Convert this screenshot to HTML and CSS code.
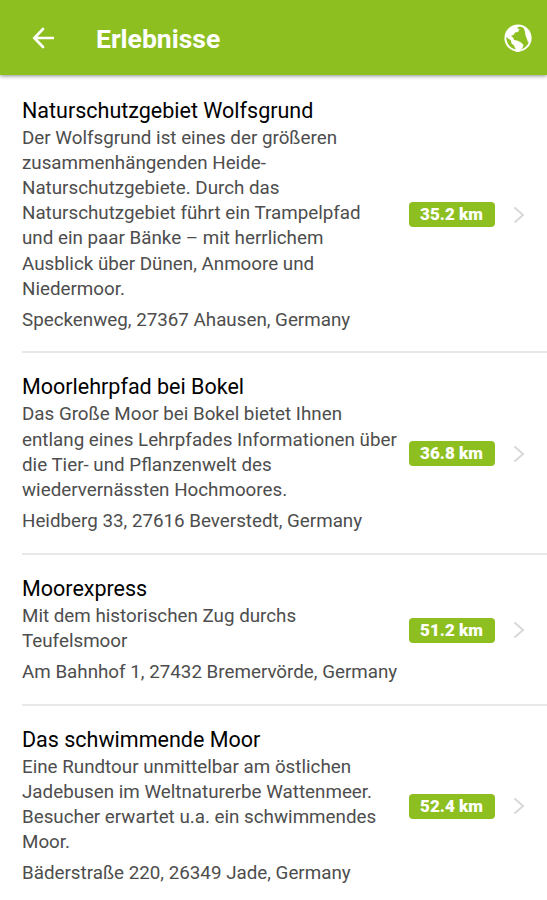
FILE: index.html
```html
<!DOCTYPE html>
<html lang="de">
<head>
    <meta charset="UTF-8">
    <meta name="viewport" content="width=device-width, initial-scale=1.0">
    <title>Erlebnisse</title>
    <link rel="stylesheet" href="styles.css">
</head>
<body>
    <header class="toolbar">
        <svg class="back" viewBox="0 0 22 22">
            <path d="M21 11H2.5M11 2L2.300 11l8.700 9"/>
        </svg>
        <h1>Erlebnisse</h1>
        <svg class="globe" viewBox="0 0 28 28">
            <circle cx="14" cy="14" r="12.600"/>
            <path d="M2 10C4 4 9 1 15 1.200L15.500 2.500l-2.500 1.500 2.500 1.500-1.500 2.500-3 .5-1 2-3 1.500 2.500 2 .5 2 3 .5 4 2 2.500 2.500-1 3-2.500 2-1 3-3 0-.5-4-1.500-3.500-2.500-2-.5-3-3.500-2.500-2.500-2.500zM19 2.500l5 4 2.500 5-.5 6-2 1-1-3.500-1.500-3.500-.5-4z"/>
        </svg>
    </header>

    <ul class="list">
        <li class="item">
            <div class="info">
                <h2>Naturschutzgebiet Wolfsgrund</h2>
                <p>Der Wolfsgrund ist eines der größeren zusammenhängenden Heide-Naturschutzgebiete. Durch das Naturschutzgebiet führt ein Trampelpfad<br>und ein paar Bänke – mit herrlichem<br>Ausblick über Dünen, Anmoore und<br>Niedermoor.</p>
                <p class="address">Speckenweg, 27367 Ahausen, Germany</p>
            </div>
            <span class="badge">35.2 km</span>
            <svg class="chevron" viewBox="0 0 12 18"><path d="M1.500 1.500L10 9l-8.500 7.500"/></svg>
        </li>
        <li class="item">
            <div class="info">
                <h2>Moorlehrpfad bei Bokel</h2>
                <p>Das Große Moor bei Bokel bietet Ihnen entlang eines Lehrpfades Informationen über die Tier- und Pflanzenwelt des wiedervernässten Hochmoores.</p>
                <p class="address">Heidberg 33, 27616 Beverstedt, Germany</p>
            </div>
            <span class="badge">36.8 km</span>
            <svg class="chevron" viewBox="0 0 12 18"><path d="M1.500 1.500L10 9l-8.500 7.500"/></svg>
        </li>
        <li class="item">
            <div class="info">
                <h2>Moorexpress</h2>
                <p>Mit dem historischen Zug durchs Teufelsmoor</p>
                <p class="address">Am Bahnhof 1, 27432 Bremervörde, Germany</p>
            </div>
            <span class="badge">51.2 km</span>
            <svg class="chevron" viewBox="0 0 12 18"><path d="M1.500 1.500L10 9l-8.500 7.500"/></svg>
        </li>
        <li class="item">
            <div class="info">
                <h2>Das schwimmende Moor</h2>
                <p>Eine Rundtour unmittelbar am östlichen Jadebusen im Weltnaturerbe Wattenmeer. Besucher erwartet u.a. ein schwimmendes Moor.</p>
                <p class="address">Bäderstraße 220, 26349 Jade, Germany</p>
            </div>
            <span class="badge">52.4 km</span>
            <svg class="chevron" viewBox="0 0 12 18"><path d="M1.500 1.500L10 9l-8.500 7.500"/></svg>
        </li>
    </ul>
</body>
</html>
```
FILE: styles.css
```css
*{
    margin: 0;
    padding: 0;
    box-sizing: border-box;
}

body{
    font-family: Roboto, sans-serif;
    background-color: #fff;
    height: 900px;
    overflow: hidden;
}

.toolbar{
    height: 75px;
    padding: 0 15px 0 32px;
    background-color: #8dbf21;
    box-shadow: 0 1px 4px rgba(0, 0, 0, 0.45);
    color: white;
    display: flex;
    align-items: center;
}

.toolbar h1{
    flex: 1;
    margin-left: 42px;
    padding-top: 1px;
    font-size: 26.5px;
    font-weight: 700;
}

.back{
    width: 22px;
    height: 22px;
    fill: none;
    stroke: white;
    stroke-width: 2.6;
    stroke-linecap: round;
}

.globe{
    width: 28px;
    height: 28px;
    fill: white;
}

.globe circle{
    fill: none;
    stroke: white;
    stroke-width: 2;
}

.list{
    list-style: none;
    padding: 1.5px 0 0 22px;
}

.item{
    display: flex;
    align-items: center;
    padding: 20px 22px 18.3px 0;
    border-bottom: 2px solid #e8e8e8;
}

.item:last-child{
    border-bottom: none;
}

.info{
    width: 380px;
    margin-right: 6.5px;
}

.info h2{
    font-size: 21.5px;
    font-weight: 400;
    line-height: 28px;
    margin-bottom: 1px;
    color: #000;
}

.info p{
    font-size: 18.8px;
    line-height: 25.2px;
    color: #4d4d4d;
}

.info .address{
    margin-top: 6px;
}

.badge{
    width: 86px;
    height: 25px;
    border-radius: 4px;
    background-color: #8dbf21;
    color: white;
    font-size: 17px;
    font-weight: 900;
    line-height: 25px;
    text-align: center;
}

.chevron{
    width: 12px;
    height: 18px;
    margin-left: auto;
    fill: none;
    stroke: #d8d8d8;
    stroke-width: 2;
}
```
